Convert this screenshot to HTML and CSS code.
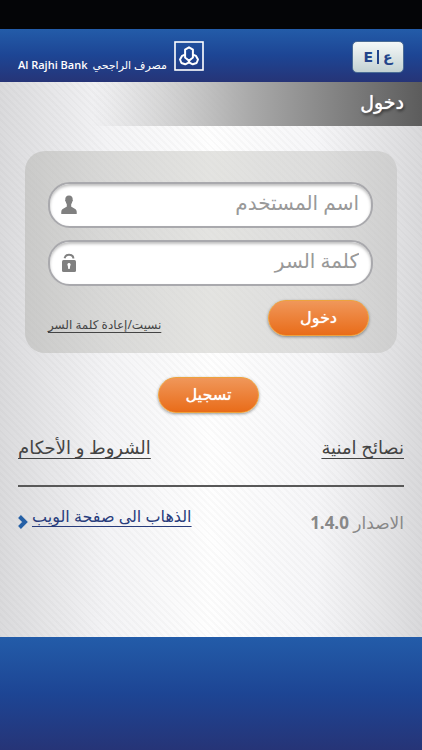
FILE: index.html
```
<!DOCTYPE html>
<html lang="ar" dir="rtl">
<head>
  <meta charset="UTF-8">
  <meta name="viewport" content="width=device-width, initial-scale=1.0">
  <title>دخول</title>
  <link rel="stylesheet" href="styles.css">
</head>
<body>
  <div class="status-bar"></div>

  <header class="header">
    <button type="button" class="lang-btn" dir="ltr"><b>E</b><span class="lang-sep"></span><b>ع</b></button>
    <div class="brand" dir="ltr">
      <span class="brand-name">Al Rajhi Bank</span>
      <span class="brand-name-ar" lang="ar">مصرف الراجحي</span>
      <svg class="brand-logo" viewBox="0 0 30 30" width="30" height="30" fill="none" stroke="#fff">
        <rect x="1" y="1" width="28" height="28" stroke-width="1.6"/>
        <path d="M15 6.3l3.900 2.400v7.800L15 19.800l-3.900-3.300V8.700z" stroke-width="2" stroke-linejoin="round"/>
        <path d="M11 13.700l-3 1.200-2 3.600 1.400 3.500 3.800 1.300 3.400-1.700.4-2M19 13.700l3 1.200 2 3.600-1.400 3.500-3.800 1.300-3.400-1.700-.4-2" stroke-width="2" stroke-linejoin="round"/>
      </svg>
    </div>
  </header>

  <main class="content">
    <h1 class="page-title">دخول</h1>

    <form class="login-form" id="login-form">
      <div class="field">
        <input type="text" id="username" placeholder="اسم المستخدم" aria-label="اسم المستخدم">
        <svg class="field-icon" viewBox="0 0 16 20" width="16" height="20" fill="#808080">
          <path d="M8 .5c2.700 0 3.900 1.800 3.700 4.200.4.500.2 1.400-.4 1.800-.2 1.200-.6 2-1.100 2.700v2.300c.8 1.300 4.800 1.800 5.400 4.500.2.900.2 2 .1 3H.3c-.1-1-.1-2.100.1-3 .6-2.700 4.600-3.200 5.400-4.500V9.200c-.5-.7-.9-1.500-1.100-2.700-.6-.4-.8-1.300-.4-1.800C4.100 2.300 5.300.5 8 .5z"/>
        </svg>
      </div>
      <div class="field">
        <input type="password" id="password" placeholder="كلمة السر" aria-label="كلمة السر">
        <svg class="field-icon" viewBox="0 0 16 20" width="16" height="20">
          <path d="M3.600 5.200C4.100 2.900 5.700 1.700 8 1.700s4.200 1.400 4.400 3.800" fill="none" stroke="#808080" stroke-width="2"/>
          <rect x="1" y="7" width="14" height="12" rx="1.500" fill="#808080"/>
          <path d="M8 10a1.600 1.600 0 0 1 1.200 2.700l-.5 3.300H7.300l-.5-3.300A1.600 1.600 0 0 1 8 10z" fill="#fff"/>
        </svg>
      </div>
      <div class="form-actions">
        <button type="submit" class="btn">دخول</button>
        <a href="#" class="forgot-link">نسيت/إعادة كلمة السر</a>
      </div>
    </form>

    <div class="register">
      <button type="button" class="btn">تسجيل</button>
    </div>

    <div class="links">
      <a href="#">نصائح امنية</a>
      <a href="#">الشروط و الأحكام</a>
    </div>

    <div class="info">
      <p class="version">الاصدار <b>1.4.0</b></p>
      <a href="#" class="web-link">
        <span>الذهاب الى صفحة الويب</span>
        <svg viewBox="0 0 10 14" width="10" height="14" fill="none" stroke="#2560a6" stroke-width="4">
          <path d="M1.500 1.500L7 7l-5.500 5.500"/>
        </svg>
      </a>
    </div>
  </main>

  <footer class="footer"></footer>
</body>
</html>
```
FILE: styles.css
```
* {
  box-sizing: border-box;
}

body {
  margin: 0;
  min-height: 100vh;
  display: flex;
  flex-direction: column;
  font-family: "Noto Sans", "DejaVu Sans", sans-serif;
  color: #444;
}

.status-bar {
  height: 29px;
  background-color: #040507;
}

.header {
  display: flex;
  justify-content: space-between;
  align-items: flex-start;
  height: 53px;
  padding: 12px 18px 0;
  background: linear-gradient(#235ca9, #1d4594 50%, #263477);
}

.lang-btn {
  display: flex;
  justify-content: center;
  align-items: center;
  gap: 4px;
  width: 52px;
  height: 32px;
  padding: 0;
  border: 1px solid #4a6c96;
  border-radius: 5px;
  background: linear-gradient(#f5f8f8, #c3d2d3);
  color: #22448a;
  font-family: "DejaVu Sans", sans-serif;
  font-size: 14px;
}

.lang-sep {
  width: 2px;
  height: 14px;
  background-color: #22448a;
}

.brand {
  display: flex;
  align-items: flex-end;
  color: #fff;
  line-height: 12px;
}

.brand-name {
  font-family: "Open Sans", sans-serif;
  font-size: 11px;
  font-weight: 600;
}

.brand-name-ar {
  margin-left: 5px;
  font-size: 11px;
}

.brand-logo {
  margin-left: 7px;
}

.content {
  flex: 1;
  background:
    repeating-linear-gradient(45deg, rgba(0, 0, 0, 0.02) 0 2px, transparent 2px 5px),
    linear-gradient(90deg, #dadadc, #f3f3f5 25%, #fefefe 50%, #f6f6f8 75%, #d9d9db);
}

.page-title {
  height: 44px;
  margin: 0 0 25px;
  padding: 0 18px;
  background: linear-gradient(90deg, transparent 22%, #a8a8a8 60%, #5c5c5c);
  color: #fff;
  font-size: 19px;
  font-weight: normal;
  line-height: 40px;
  text-shadow: 0 0 1px #fff, 1px 2px 3px rgba(0, 0, 0, 0.6);
}

.login-form {
  margin: 0 25px;
  padding: 31px 24px 17px 23px;
  border-radius: 20px;
  background: linear-gradient(90deg, rgba(180, 180, 176, 0.5), rgba(210, 210, 206, 0.6) 50%, rgba(190, 190, 188, 0.5));
}

.field {
  position: relative;
  margin-bottom: 12px;
}

.field input {
  display: block;
  width: 100%;
  height: 46px;
  padding: 0 12px 6px 48px;
  border: 2px solid #a9a9ad;
  border-radius: 22px;
  background-color: #fff;
  box-shadow: inset 0 2px 3px rgba(0, 0, 0, 0.25);
  color: #444;
  font-family: inherit;
  font-size: 20px;
}

.field input::placeholder {
  color: #999;
  opacity: 1;
}

.field-icon {
  position: absolute;
  left: 13px;
  top: 13px;
}

.form-actions {
  display: flex;
  justify-content: space-between;
  align-items: flex-end;
  padding: 2px 4px 0 0;
}

.btn {
  width: 101px;
  height: 36px;
  padding: 0 0 2px;
  border: 1px solid #eda23e;
  border-radius: 18px;
  background: linear-gradient(#f0975a, #e96c19);
  box-shadow: 0 1px 3px rgba(0, 0, 0, 0.4);
  color: #fff;
  font-family: inherit;
  font-size: 16px;
  font-weight: normal;
  text-shadow: 0 0 1px #fff;
  cursor: pointer;
}

.forgot-link {
  color: #444;
  font-size: 12px;
  line-height: 22px;
  text-underline-offset: 3px;
}

.register {
  padding: 24px 5px 0 0;
  text-align: center;
}

.links {
  display: flex;
  justify-content: space-between;
  margin: 0 18px;
  padding: 20px 0 24px;
  border-bottom: 2px solid #585858;
}

.links a {
  color: #444;
  font-size: 18px;
  line-height: 28px;
  text-underline-offset: 4px;
}

.info {
  display: flex;
  justify-content: space-between;
  align-items: flex-start;
  margin: 0 18px;
  padding-top: 16px;
}

.version {
  margin: 6px 0 0;
  color: #888;
  font-size: 17px;
  line-height: 28px;
}

.web-link {
  display: flex;
  align-items: flex-end;
  gap: 4px;
  color: #283c7c;
  font-size: 16px;
  line-height: 26px;
  text-underline-offset: 4px;
}

.footer {
  height: 113px;
  background: linear-gradient(#235ca9, #1d4594 50%, #263477);
}
```
